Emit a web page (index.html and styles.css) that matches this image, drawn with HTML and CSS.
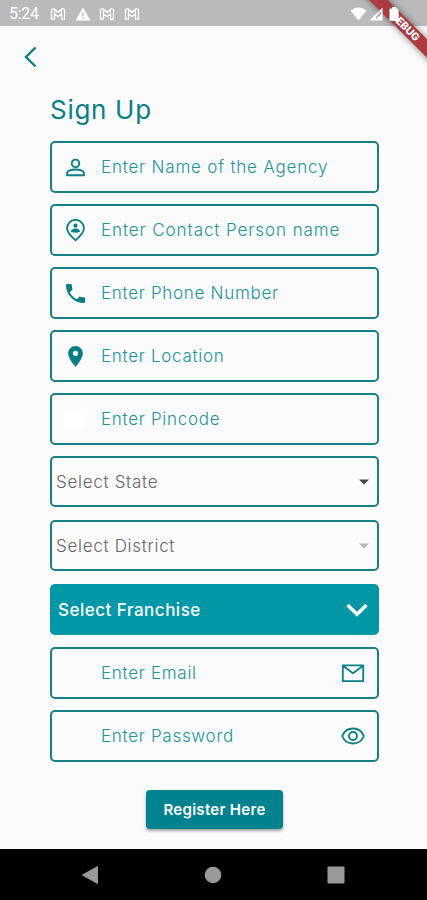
FILE: index.html
```html
<!DOCTYPE html>
<html lang="en">
<head>
    <meta charset="UTF-8">
    <meta name="viewport" content="width=device-width, initial-scale=1.0">
    <title>Sign Up</title>
    <link rel="stylesheet" href="styles.css">
</head>
<body>
    <svg class="sprite" width="0" height="0">
        <symbol id="mail-badge" viewBox="0 0 16 14">
            <path d="M1.5 2.5v9.8h3V7L8 9.6 11.5 7v5.3h3V2.5L12.5 1.5 8 5 3.5 1.5z" fill="none" stroke="#fff" stroke-width="1.3" stroke-linejoin="round"/>
            <path d="M4.5 7V3M11.5 7V3M4.500 3 8 6l3.500-3" fill="none" stroke="#fff" stroke-width="1"/>
        </symbol>
    </svg>

    <header class="status-bar">
        <span class="time">5:24</span>
        <div class="notifications">
            <svg width="16" height="14"><use href="#mail-badge"/></svg>
            <svg width="16" height="14" viewBox="0 0 16 14"><path fill="#fff" fill-rule="evenodd" d="M8 .5 15.5 13.5H.5zM7.300 5.300v4h1.400v-4zM7.300 10.300v1.500h1.400v-1.500z"/></svg>
            <svg width="16" height="14"><use href="#mail-badge"/></svg>
            <svg width="16" height="14"><use href="#mail-badge"/></svg>
        </div>
        <div class="system-icons">
            <svg width="17" height="14" viewBox="0 0 17 14"><path fill="#fff" d="M.5 3.5Q8.500-2.500 16.500 3.500L8.500 13.500z"/></svg>
            <svg width="14" height="14" viewBox="0 0 14 14"><path fill="#fff" fill-rule="evenodd" d="M13.500.5v13H.5zM12 4.500 7 9.500v2.800l5-5z"/></svg>
            <svg class="battery" width="10" height="14" viewBox="0 0 10 14"><path fill="#fff" d="M3 0h4v1.500h1.500q1 0 1 1v10.500q0 1-1 1h-7q-1 0-1-1V2.500q0-1 1-1H3z"/></svg>
        </div>
    </header>

    <div class="debug-corner">
        <div class="debug-banner">DEBUG</div>
    </div>

    <main>
        <a class="back" href="#" aria-label="Back">
            <svg width="14" height="22" viewBox="0 0 14 22"><path d="M11.500 1.500 2 11l9.500 9.500" fill="none" stroke="#087f88" stroke-width="2.400"/></svg>
        </a>

        <form class="signup">
            <h1>Sign Up</h1>

            <div class="field">
                <svg class="icon" viewBox="0 0 24 24"><g fill="none" stroke="#087f88" stroke-width="2"><circle cx="12" cy="7.700" r="3.900"/><path d="M3.200 20v-2.300c0-2 4.500-3.700 8.800-3.700s8.800 1.700 8.800 3.700V20z" stroke-linejoin="round"/></g></svg>
                <span class="hint agency">Enter Name of the Agency</span>
            </div>
            <div class="field">
                <svg class="icon" viewBox="0 0 24 24"><path d="M12 22.300C6.500 17.500 3.200 13.500 3.200 9.700a8.800 8.800 0 0 1 17.600 0c0 3.800-3.300 7.800-8.800 12.600z" fill="none" stroke="#087f88" stroke-width="1.900"/><circle cx="12" cy="7" r="2.200" fill="#087f88"/><path d="M7.300 13.300c0-2.300 2.700-3.300 4.700-3.300s4.700 1 4.700 3.300q-4.700 2.200-9.400 0z" fill="#087f88"/></svg>
                <span class="hint contact">Enter Contact Person name</span>
            </div>
            <div class="field">
                <svg class="icon" viewBox="0 0 24 24"><path fill="#087f88" transform="translate(-1.3 -1.3) scale(1.11)" d="M6.620 10.790c1.440 2.830 3.760 5.140 6.590 6.590l2.200-2.200c.27-.27.67-.36 1.020-.24 1.120.37 2.330.57 3.570.57.55 0 1 .45 1 1V20c0 .55-.45 1-1 1-9.390 0-17-7.610-17-17 0-.55.450-1 1-1h3.500c.55 0 1 .45 1 1 0 1.250.2 2.450.570 3.570.11.350.03.740-.25 1.020l-2.200 2.200z"/></svg>
                <span class="hint phone">Enter Phone Number</span>
            </div>
            <div class="field">
                <svg class="icon" viewBox="0 0 24 24"><path fill="#087f88" transform="translate(-1.2 -1.2) scale(1.1)" d="M12 2C8.130 2 5 5.130 5 9c0 5.250 7 13 7 13s7-7.750 7-13c0-3.870-3.130-7-7-7zm0 9.500a2.500 2.500 0 0 1 0-5 2.500 2.500 0 0 1 0 5z"/></svg>
                <span class="hint location">Enter Location</span>
            </div>
            <div class="field">
                <span class="icon blank"></span>
                <span class="hint pincode">Enter Pincode</span>
            </div>

            <div class="field select">
                <span class="state">Select State</span>
                <svg width="10" height="6" viewBox="0 0 10 6"><path d="M0 .5h10L5 5.500z" fill="#444"/></svg>
            </div>
            <div class="field select district-field">
                <span class="district">Select District</span>
                <svg width="10" height="6" viewBox="0 0 10 6"><path d="M0 .5h10L5 5.500z" fill="#b9b9b9"/></svg>
            </div>
            <div class="field franchise">
                <span>Select Franchise</span>
                <svg width="24" height="16" viewBox="0 0 24 16"><path d="M2.500 3 12 12.200 21.500 3" fill="none" stroke="#fff" stroke-width="3.600"/></svg>
            </div>

            <div class="field">
                <span class="icon"></span>
                <span class="hint email">Enter Email</span>
                <svg class="suffix" viewBox="0 0 24 24"><path d="M1.800 4.300h20.400v15.900H1.800zM2 4.800l10 7.400 10-7.400" fill="none" stroke="#087f88" stroke-width="1.800" stroke-linejoin="round"/></svg>
            </div>
            <div class="field">
                <span class="icon"></span>
                <span class="hint password">Enter Password</span>
                <svg class="suffix" viewBox="0 0 24 24"><g fill="none" stroke="#087f88" stroke-width="1.800"><path d="M1.200 12C5.200 2 18.800 2 22.800 12 18.800 22 5.200 22 1.200 12z"/><circle cx="12" cy="12" r="4"/></g></svg>
            </div>

            <button class="register" type="button">Register Here</button>
        </form>
    </main>

    <footer class="nav-bar">
        <svg width="18" height="20" viewBox="0 0 18 20"><path d="M.5 10 17 .8v18.400z" fill="#999"/></svg>
        <svg width="18" height="18" viewBox="0 0 18 18"><circle cx="9" cy="9" r="8.300" fill="#999"/></svg>
        <svg width="18" height="18" viewBox="0 0 18 18"><rect x=".5" y=".5" width="17" height="17" rx="1" fill="#999"/></svg>
    </footer>
</body>
</html>
```

FILE: styles.css
```css
/* General Styling */
* {
    box-sizing: border-box;
}

body {
    font-family: 'Inter', sans-serif;
    margin: 0;
    width: 427px;
    height: 900px;
    display: flex;
    flex-direction: column;
    position: relative;
    overflow: hidden;
    background-color: #fbfbfb;
    color: #087f88;
}

svg {
    display: block;
    flex-shrink: 0;
}

.sprite {
    position: absolute;
}

/* Status bar */
.status-bar {
    height: 26px;
    padding: 1px 28px 0 9px;
    display: flex;
    align-items: center;
    background-color: #bababa;
    color: white;
}

.time {
    width: 41px;
    font-family: 'Roboto', sans-serif;
    font-size: 16px;
    letter-spacing: -0.3px;
}

.notifications {
    display: flex;
    gap: 8.5px;
}

.system-icons {
    display: flex;
    gap: 2px;
    margin-left: auto;
    position: relative;
    z-index: 2;
}

.battery {
    margin-left: 4px;
    margin-right: -4px;
}

.status-bar .system-icons {
    margin-right: 4px;
}

/* Debug ribbon */
.debug-corner {
    position: absolute;
    top: 0;
    right: 0;
    width: 85px;
    height: 85px;
    overflow: hidden;
}

.debug-banner {
    position: absolute;
    top: 20px;
    right: -38px;
    width: 120px;
    height: 13px;
    background-color: #ab3b40;
    box-shadow: 0 0 7px rgba(0, 0, 0, 0.5);
    color: white;
    font-size: 10.5px;
    font-weight: 800;
    line-height: 13px;
    text-align: center;
    transform: rotate(45deg);
}

/* Sign up form */
main {
    flex: 1;
}

.back {
    display: block;
    width: 14px;
    margin: 20px 0 0 24px;
}

.signup {
    width: 329px;
    margin: 22px 0 0 50px;
    display: flex;
    flex-direction: column;
    gap: 11px;
}

h1 {
    height: 40px;
    margin: 0;
    font-size: 26px;
    font-weight: 400;
    line-height: 40px;
    letter-spacing: 0.7px;
}

.field {
    height: 52px;
    padding: 0 13px;
    display: flex;
    align-items: center;
    border: 2px solid #177f86;
    border-radius: 5px;
    font-size: 17px;
    font-weight: 300;
    white-space: nowrap;
}

.icon {
    width: 23px;
    height: 23px;
    margin-right: 14px;
    margin-left: -1px;
}

.blank {
    height: 18px;
    background-color: white;
}

.hint {
    color: #20949d;
    letter-spacing: 0.7px;
}

.agency {
    letter-spacing: 0.8px;
}

.contact {
    letter-spacing: 0.92px;
}

.suffix {
    width: 24px;
    height: 24px;
    margin-left: auto;
    margin-right: -1px;
}

/* Dropdowns */
.select {
    height: 51px;
    padding: 0 8px 0 4px;
    justify-content: space-between;
    color: #666;
    letter-spacing: 0.7px;
}

.district-field {
    margin-top: 2px;
}

.franchise {
    height: 51px;
    margin-top: 2px;
    margin-bottom: 1px;
    padding: 0 8px 0 6px;
    justify-content: space-between;
    background-color: #0097a7;
    border-color: #0097a7;
    color: white;
    font-weight: 500;
    letter-spacing: 0.5px;
}

/* Register button */
.register {
    width: 137px;
    height: 39px;
    margin: 17px 0 0 96px;
    padding: 0;
    border: none;
    border-radius: 4px;
    background-color: #00838f;
    box-shadow: 0 2px 3px rgba(0, 0, 0, 0.35);
    color: white;
    font-family: inherit;
    font-size: 15px;
    font-weight: 600;
    letter-spacing: 0.3px;
}

/* Navigation bar */
.nav-bar {
    height: 51px;
    padding: 0 82px 0 81px;
    display: flex;
    justify-content: space-between;
    align-items: center;
    background-color: black;
}
```
